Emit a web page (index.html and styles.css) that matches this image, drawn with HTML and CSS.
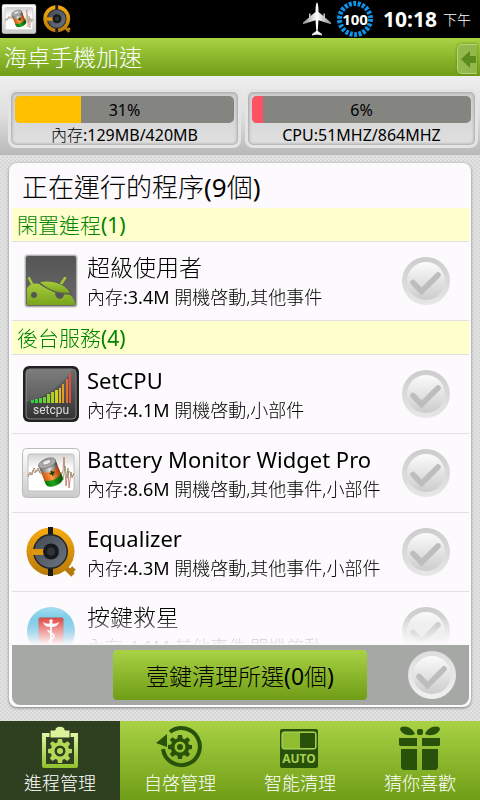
FILE: index.html
```html
<!DOCTYPE html>
<html lang="zh-Hant">
<head>
<meta charset="utf-8">
<meta name="viewport" content="width=device-width, initial-scale=1">
<title>海卓手機加速</title>
<link rel="stylesheet" href="styles.css">
</head>
<body>
<svg class="defs" width="0" height="0" aria-hidden="true">
  <defs>
    <linearGradient id="rim" x1="0" y1="0" x2="0" y2="1"><stop offset="0" stop-color="#cbcccb"/><stop offset="1" stop-color="#e6e7e6"/></linearGradient>
    <linearGradient id="disc" x1="0" y1="0" x2="0" y2="1"><stop offset="0" stop-color="#fbfbfb"/><stop offset="1" stop-color="#cbcccb"/></linearGradient>
    <linearGradient id="rimLight" x1="0" y1="0" x2="0" y2="1"><stop offset="0" stop-color="#dcdddc"/><stop offset="1" stop-color="#f0f0f0"/></linearGradient>
    <linearGradient id="gold" x1="0" y1="0" x2="0" y2="1"><stop offset="0" stop-color="#f8ac10"/><stop offset="1" stop-color="#b87908"/></linearGradient>
    <linearGradient id="steel" x1="0" y1="0" x2="1" y2="1"><stop offset="0" stop-color="#424a55"/><stop offset="1" stop-color="#6b7480"/></linearGradient>
    <linearGradient id="robot" x1="0" y1="0" x2="0" y2="1"><stop offset="0" stop-color="#a8cb3c"/><stop offset="1" stop-color="#78a51c"/></linearGradient>
    <linearGradient id="tile" x1="0" y1="0" x2="0" y2="1"><stop offset="0" stop-color="#555"/><stop offset="1" stop-color="#6a6a6a"/></linearGradient>
    <linearGradient id="cpu" x1="0" y1="0" x2="0" y2="1"><stop offset="0" stop-color="#6b6b6b"/><stop offset="1" stop-color="#333"/></linearGradient>
    <linearGradient id="frame" x1="0" y1="0" x2="0" y2="1"><stop offset="0" stop-color="#fff"/><stop offset="1" stop-color="#c9cbc9"/></linearGradient>
    <linearGradient id="screen" x1="0" y1="0" x2="0" y2="1"><stop offset="0" stop-color="#d4d4d4"/><stop offset=".4" stop-color="#fff"/></linearGradient>
    <linearGradient id="can" x1="0" y1="0" x2="1" y2="0"><stop offset="0" stop-color="#c65310"/><stop offset=".45" stop-color="#ff9b45"/><stop offset="1" stop-color="#a23c0a"/></linearGradient>
    <linearGradient id="canGreen" x1="0" y1="0" x2="1" y2="0"><stop offset="0" stop-color="#087a08"/><stop offset=".4" stop-color="#20a520"/><stop offset="1" stop-color="#044f04"/></linearGradient>
    <linearGradient id="canTop" x1="0" y1="0" x2="1" y2="0"><stop offset="0" stop-color="#666"/><stop offset=".5" stop-color="#ddd"/><stop offset="1" stop-color="#444"/></linearGradient>
    <linearGradient id="sky" x1="0" y1="0" x2="0" y2="1"><stop offset="0" stop-color="#a4dff0"/><stop offset=".5" stop-color="#4fb4dc"/><stop offset="1" stop-color="#2f94c8"/></linearGradient>
    <linearGradient id="lime" x1="0" y1="0" x2="0" y2="1"><stop offset="0" stop-color="#e2f6a6"/><stop offset="1" stop-color="#8fc02c"/></linearGradient>
    <linearGradient id="plane" x1="0" y1="0" x2="1" y2="0"><stop offset="0" stop-color="#8e8e8e"/><stop offset=".5" stop-color="#fff"/><stop offset="1" stop-color="#8e8e8e"/></linearGradient>
    <symbol id="i-check" viewBox="0 0 48 48">
      <circle cx="24" cy="24" r="24" fill="url(#rim)"/><circle cx="24" cy="24" r="19" fill="url(#disc)"/>
      <path d="M11 25.500l8.500 9L36 18" fill="none" stroke="#bcbebc" stroke-width="5.500" stroke-linecap="round"/>
    </symbol>
    <symbol id="i-check-light" viewBox="0 0 48 48">
      <circle cx="24" cy="24" r="24" fill="url(#rimLight)"/><circle cx="24" cy="24" r="19" fill="url(#disc)"/>
      <path d="M11 25.500l8.500 9L36 18" fill="none" stroke="#bcbebc" stroke-width="5.500" stroke-linecap="round"/>
    </symbol>
    <symbol id="i-battery" viewBox="0 0 58 50">
      <rect x=".5" y=".5" width="57" height="49" rx="4" fill="url(#frame)" stroke="#b9bcb9"/>
      <rect x="6" y="6" width="46" height="37" rx="2" fill="url(#screen)" stroke="#bfc1bf"/>
      <path d="M6 29l2-5 2 3 2-7 2 4 2-4 2 5M38 30l3-7 1-14 2 29 2-18 1 20 2-16 1 6 2-5" fill="none" stroke="#b5604c" stroke-width=".7"/>
      <path d="M6 26l3 1 2-5 2 3 3-3 3 4M39 24l2 8 2-14 2 12 2-7 3 5 2-2" fill="none" stroke="#6d8f60" stroke-width=".7"/>
      <g transform="rotate(-22 29 25)">
        <path d="M20 17v16a9 4.500 0 0 0 18 0V17z" fill="url(#can)"/>
        <path d="M20 29a9 4 0 0 0 18-2v7a9 4.500 0 0 1-18 0z" fill="url(#canGreen)"/>
        <path d="M20 14v5a9 4.500 0 0 0 18 0v-5z" fill="url(#canTop)"/>
        <ellipse cx="29" cy="14.500" rx="9" ry="4.500" fill="#aaa" stroke="#777" stroke-width=".8"/>
        <ellipse cx="29" cy="13.500" rx="4.500" ry="2.200" fill="#eee" stroke="#888" stroke-width=".8"/>
        <path d="M30 23v5M27.500 25.500h5" stroke="#173f10" stroke-width="1.800"/>
      </g>
    </symbol>
    <symbol id="i-equalizer" viewBox="0 0 50 50">
      <path d="M36 37l11 11M43 46l5-5" stroke="#b67a0c" stroke-width="5"/>
      <circle cx="24.500" cy="24.500" r="24" fill="url(#gold)"/>
      <path d="M22 0h5v9h-5zM22 40h5v9h-5z" fill="#17191c"/>
      <circle cx="24.500" cy="24.500" r="17.500" fill="#22262c"/><circle cx="24.500" cy="24.500" r="16" fill="url(#steel)"/>
      <path d="M6 22h12v6H6z" fill="#dd970e"/>
      <circle cx="25" cy="24.500" r="8" fill="#17191c"/><circle cx="25" cy="24.500" r="4" fill="#30343a"/>
    </symbol>
    <symbol id="i-gear" viewBox="0 0 24 24">
      <path fill-rule="evenodd" d="M10 0h4l.6 3.400 2 .8L19.500 2.200l2.600 2.600-2 2.900.8 2L24 10v4l-3.100.5-.8 2 2 2.800-2.700 2.700-2.900-2-2 .8L14 24h-4l-.6-3.200-2-.8-2.900 2-2.700-2.700 2-2.800-.8-2L0 14v-4l3.100-.4.8-2-2-2.800 2.600-2.600 2.900 2 2-.8zM12 6.500a5.500 5.500 0 1 0 0 11 5.500 5.500 0 0 0 0-11z"/>
      <circle cx="12" cy="12" r="3"/>
    </symbol>
  </defs>
</svg>

<header class="status">
  <svg class="status-battery" viewBox="0 0 58 50"><use href="#i-battery"/></svg>
  <svg class="status-eq" viewBox="0 0 50 50"><use href="#i-equalizer"/></svg>
  <span class="spacer"></span>
  <svg class="airplane" viewBox="0 0 28 36"><path d="M14 1c-1.200 2-1.500 5-1.500 10L7.500 15V12.500H6v4L0 21.500v1.800l12.500-4 .8 10.700L9 33v1.500l5-1 5 1V33l-4.300-3 .8-10.700 12.500 4v-1.800l-6-5v-4h-1.500V15l-5-4C15.500 6 15.200 3 14 1z" fill="url(#plane)"/></svg>
  <div class="charge">
    <svg viewBox="0 0 36 36"><circle cx="18" cy="18" r="15.500" fill="none" stroke="#0c93ee" stroke-width="5" stroke-dasharray="2.900 1.528"/></svg>
    <span>100</span>
  </div>
  <time class="clock">10:18</time><span class="ampm">下午</span>
</header>

<div class="titlebar">
  <h1>海卓手機加速</h1>
  <button class="drawer" type="button" aria-label="返回">
    <svg viewBox="0 0 18 26"><path d="M3 13L12 5v5h8v7h-8v5z" fill="#5d8c1c"/></svg>
  </button>
</div>

<section class="meters">
  <div class="meter">
    <div class="track"><div class="fill memory" style="width:30%"></div><span class="n">31%</span></div>
    <p>內存<span class="n">:129MB/420MB</span></p>
  </div>
  <div class="meter">
    <div class="track"><div class="fill cpu" style="width:5%"></div><span class="n">6%</span></div>
    <p class="n">CPU:51MHZ/864MHZ</p>
  </div>
</section>

<main class="panel">
  <h2>正在運行的程序<span class="n">(9</span>個<span class="n">)</span></h2>
  <div class="list">
    <h3>閑置進程<span class="n">(1)</span></h3>
    <label class="row">
      <svg class="app" viewBox="0 0 58 58">
        <rect x="2" y="2" width="54" height="54" rx="4" fill="#000" opacity=".12"/><rect x="3" y="3" width="52" height="52" rx="3" fill="#000" opacity=".2"/><rect x="4" y="4" width="50" height="50" rx="2" fill="url(#tile)"/>
        <path d="M5 53V36c4-5 9-5 14-4 9 0 22 1 28 10 4 3 6 7 6 11z" fill="url(#robot)"/>
        <path d="M11 34L7 26M39 32l4-6" stroke="#a3c936" stroke-width="2.500" stroke-linecap="round"/>
        <path d="M16 29C30 27 46 32 51 43L36 42C30 39 22 36 16 31z" fill="#5b5d58"/>
        <path d="M18 30c13-2 25 2 30 11-12 0-22-3-30-11z" fill="url(#robot)"/>
        <path d="M33 41l9 1c0 7-9 6-9-1z" fill="#555"/>
        <circle cx="12" cy="43" r="3" fill="#555"/>
      </svg>
      <span class="info"><b>超級使用者</b><small>內存<span class="n">:3.4M</span> 開機啓動,其他事件</small></span>
      <span class="tick"><input type="checkbox"><svg viewBox="0 0 48 48"><use href="#i-check"/></svg></span>
    </label>
    <h3>後台服務<span class="n">(4)</span></h3>
    <label class="row">
      <svg class="app" viewBox="0 0 58 58">
        <rect x="1" y="1" width="56" height="56" rx="6" fill="#222"/><rect x="4" y="4" width="50" height="50" rx="4" fill="url(#cpu)" stroke="#858585"/>
        <path d="M4 37C22 34 40 20 50 5H8Q4 5 4 9z" fill="#fff" opacity=".12"/>
        <path d="M9 35h3v3H9z" fill="#2ecc40"/><path d="M13 34h3v4h-3z" fill="#3fd040"/><path d="M17 33h3v5h-3z" fill="#50d040"/><path d="M21 32h3v6h-3z" fill="#66d038"/><path d="M25 29h3v9h-3z" fill="#8ad030"/><path d="M29 27h3v11h-3z" fill="#a8d020"/><path d="M33 25h3v13h-3z" fill="#cfd020"/><path d="M37 23h2v15h-2z" fill="#d9b822"/><path d="M40 19h2v19h-2z" fill="#e09c24"/><path d="M44 14h2v24h-2z" fill="#e07030"/><path d="M47 8h2v30h-2z" fill="#e44c3c"/>
        <text class="cpu-name" x="29" y="49" text-anchor="middle">setcpu</text>
      </svg>
      <span class="info"><b class="n">SetCPU</b><small>內存<span class="n">:4.1M</span> 開機啓動,小部件</small></span>
      <span class="tick"><input type="checkbox"><svg viewBox="0 0 48 48"><use href="#i-check"/></svg></span>
    </label>
    <label class="row">
      <svg class="app" viewBox="0 0 58 50"><use href="#i-battery"/></svg>
      <span class="info"><b class="n">Battery Monitor Widget Pro</b><small>內存<span class="n">:8.6M</span> 開機啓動,其他事件,小部件</small></span>
      <span class="tick"><input type="checkbox"><svg viewBox="0 0 48 48"><use href="#i-check"/></svg></span>
    </label>
    <label class="row">
      <svg class="app inset" viewBox="0 0 50 50"><use href="#i-equalizer"/></svg>
      <span class="info"><b class="n">Equalizer</b><small>內存<span class="n">:4.3M</span> 開機啓動,其他事件,小部件</small></span>
      <span class="tick"><input type="checkbox"><svg viewBox="0 0 48 48"><use href="#i-check"/></svg></span>
    </label>
    <label class="row">
      <svg class="app inset" viewBox="0 0 50 50">
        <circle cx="25" cy="25" r="24" fill="url(#sky)"/><rect x="13" y="12" width="24" height="28" rx="1" fill="#e3413c" stroke="#a8524f"/>
        <path d="M25 15v23M22 24c0 3 6 3 6 6s-5 3-5 6" fill="none" stroke="#fff" stroke-width="1.800"/><path d="M17 16c3 2 5 2 8 1 3 1 5 1 8-1-1 4-4 5-8 5s-7-1-8-5z" fill="#fff"/><circle cx="25" cy="15" r="1.800" fill="#fff"/>
      </svg>
      <span class="info"><b>按鍵救星</b><small>內存<span class="n">:4.1M</span> 其他事件,開機啓動</small></span>
      <span class="tick"><input type="checkbox"><svg viewBox="0 0 48 48"><use href="#i-check"/></svg></span>
    </label>
  </div>
  <div class="actions">
    <button class="clean" type="button">壹鍵清理所選<span class="n">(0</span>個<span class="n">)</span></button>
    <label class="tick"><input type="checkbox" aria-label="全選"><svg viewBox="0 0 48 48"><use href="#i-check-light"/></svg></label>
  </div>
</main>

<nav class="tabs">
  <a class="active" href="#process">
    <svg viewBox="0 0 44 44"><path d="M4 7h36v33a2 2 0 0 1-2 2H6a2 2 0 0 1-2-2zM8 11v27h28V11z" fill="url(#lime)" fill-rule="evenodd"/><path d="M12 4h5c0-5 10-5 10 0h5v8H12z" fill="#dcf39b" stroke="#2f4020"/><svg x="10" y="13" width="24" height="24" fill="#b2da58"><use href="#i-gear"/></svg></svg>
    <span>進程管理</span>
  </a>
  <a href="#autostart">
    <svg viewBox="0 0 44 44"><path d="M12 6A18.500 18.500 0 1 1 5 23" fill="none" stroke="#28520a" stroke-width="4"/><path d="M-2 17L9 8v13z" fill="#28520a"/><svg x="10" y="9" width="24" height="24" fill="#28520a"><use href="#i-gear"/></svg></svg>
    <span>自啓管理</span>
  </a>
  <a href="#auto">
    <svg viewBox="0 0 44 44"><rect x="2" y="3" width="38" height="39" rx="2" fill="#28520a"/><rect x="4" y="6" width="34" height="17" rx="2" fill="#91bd32" stroke="#b7dc65"/><rect x="22" y="7" width="15" height="15" rx="1" fill="#28520a"/><text class="auto-text" x="21" y="37" text-anchor="middle">AUTO</text></svg>
    <span>智能清理</span>
  </a>
  <a href="#likes">
    <svg viewBox="0 0 44 44"><path d="M3 1c6-2 12 2 14 7C11 11 3 8 2 3zM41 1c-6-2-12 2-14 7 6 3 14 0 15-5z" fill="#28520a"/><rect x="19" y="3" width="6" height="6" rx="2" fill="#28520a"/><path d="M1 12h18v8H2l-1-1zM24 12h18v7l-1 1H24zM3 23h16v21H5l-2-2zM24 23h16v19l-2 2H24z" fill="#28520a"/></svg>
    <span>猜你喜歡</span>
  </a>
</nav>
</body>
</html>
```
FILE: styles.css
```css
* { box-sizing: border-box; }

body {
  margin: 0;
  height: 100vh;
  display: flex;
  flex-direction: column;
  overflow: hidden;
  background: repeating-conic-gradient(#d5d7d5 0 25%, #e2e3e2 0 50%) 0 0 / 4px 4px;
  color: #000;
  font-family: "Noto Sans", "Noto Sans CJK TC", sans-serif;
  font-weight: 300;
}

h1, h2, h3, p { margin: 0; font-weight: inherit; }
svg { display: block; }
.defs { position: absolute; }
.n { font-weight: 400; }

.status {
  display: flex;
  align-items: center;
  height: 38px;
  flex: none;
  padding: 0 9px 0 1px;
  background: #000;
  color: #fff;
}
.status-battery { width: 36px; height: 30px; }
.status-eq { width: 28px; height: 28px; margin-left: 6px; }
.spacer { flex: 1; }
.airplane { width: 28px; height: 36px; }
.charge { display: grid; place-items: center; width: 36px; height: 36px; margin: 0 10px 0 6px; }
.charge > * { grid-area: 1 / 1; }
.charge svg { width: 36px; height: 36px; }
.charge span { font-size: 15px; font-weight: 700; }
.clock { font-size: 21px; font-weight: 700; }
.ampm { margin-left: 6px; font-size: 14px; }

.titlebar {
  display: flex;
  align-items: center;
  justify-content: space-between;
  height: 38px;
  flex: none;
  padding: 0 3px 0 4px;
  background: linear-gradient(#a9d244, #6f9d16);
  color: #fff;
}
.titlebar h1 { font-size: 23px; line-height: 38px; }
.drawer {
  width: 20px;
  height: 30px;
  margin-top: 4px;
  padding: 0;
  border: 1px solid #b9d57c;
  border-right: 0;
  border-radius: 5px 0 0 5px;
  background: #93b94c;
  box-shadow: 0 0 3px #5d8418;
}
.drawer svg { width: 18px; height: 26px; }

.meters {
  display: grid;
  grid-template-columns: 1fr 1fr;
  gap: 4px;
  flex: none;
  padding: 13px 2px 7px 8px;
  background: linear-gradient(#efeff0, #dededf 50%, #b8b8b8);
}
.meter {
  height: 59px;
  padding: 4px;
  border: 3px solid #e4e4e4;
  border-radius: 8px;
  background: linear-gradient(#cfcfcf, #e0e0e0);
  box-shadow: inset 0 0 3px 1px #a5a5a5;
  font-size: 16px;
  text-align: center;
}
.track { display: grid; height: 27px; border-radius: 5px; overflow: hidden; background: #848481; }
.track > * { grid-area: 1 / 1; }
.track span { line-height: 28px; }
.memory { background: #ffc000; }
.cpu { background: #ff5064; }
.meter p { line-height: 24px; }

.panel {
  display: flex;
  flex-direction: column;
  flex: 1;
  min-height: 0;
  margin: 8px 9px 14px;
  padding: 3px 2px 2px 3px;
  border-radius: 8px;
  background: #fcfafc;
  box-shadow: 0 1px 3px #777f7c;
}
.panel h2 { flex: none; height: 42px; padding-left: 10px; font-size: 26px; line-height: 42px; }
.list { flex: 1; min-height: 0; overflow-y: auto; scrollbar-width: none; -webkit-mask-image: linear-gradient(#000 calc(100% - 28px), transparent); mask-image: linear-gradient(#000 calc(100% - 28px), transparent); }
.list h3 {
  height: 34px;
  padding-left: 5px;
  border-bottom: 1px solid #dedfe4;
  background: #ffffcb;
  color: #008300;
  font-size: 21px;
  line-height: 34px;
}
.row { display: flex; align-items: center; height: 79px; padding: 0 19px 0 10px; border-bottom: 1px solid #e2e0e4; }
.app { width: 58px; height: 58px; flex: none; }
.app.inset { padding: 4px; }
.info { flex: 1; min-width: 0; padding-left: 7px; white-space: nowrap; }
.info b, .info small { display: block; }
.info b { font-size: 23px; font-weight: 300; line-height: 32px; }
.info b.n { font-size: 22px; font-weight: 400; }
.info small { font-size: 18px; line-height: 28px; }
.cpu-name { font: 400 12px "Roboto", sans-serif; fill: #ddd; }

.tick { display: grid; flex: none; width: 48px; height: 48px; }
.tick > * { grid-area: 1 / 1; width: 48px; height: 48px; margin: 0; }
.tick input { appearance: none; border-radius: 50%; }
.tick svg { pointer-events: none; }

.actions {
  display: grid;
  grid-template-columns: 1fr 254px 1fr;
  align-items: center;
  flex: none;
  height: 60px;
  padding: 0 13px 0 12px;
  border-radius: 0 0 8px 8px;
  background: #a6a8a6;
}
.clean {
  grid-column: 2;
  height: 50px;
  padding: 0;
  border: 0;
  border-radius: 4px;
  background: linear-gradient(#a9d244, #6f9d16);
  color: #000;
  font: inherit;
  font-size: 23px;
}
.actions .tick { justify-self: end; }

.tabs { display: grid; grid-template-columns: repeat(4, 1fr); flex: none; height: 79px; background: linear-gradient(#a9d244, #6f9d16); }
.tabs a { display: flex; flex-direction: column; align-items: center; padding-top: 5px; color: #fff; font-size: 18px; line-height: 26px; text-decoration: none; }
.tabs a > svg { width: 44px; height: 44px; overflow: visible; }
.tabs .active { background: #2f4020; }
.auto-text { font: 700 12px "Noto Sans", sans-serif; fill: #a9cf50; }
```
